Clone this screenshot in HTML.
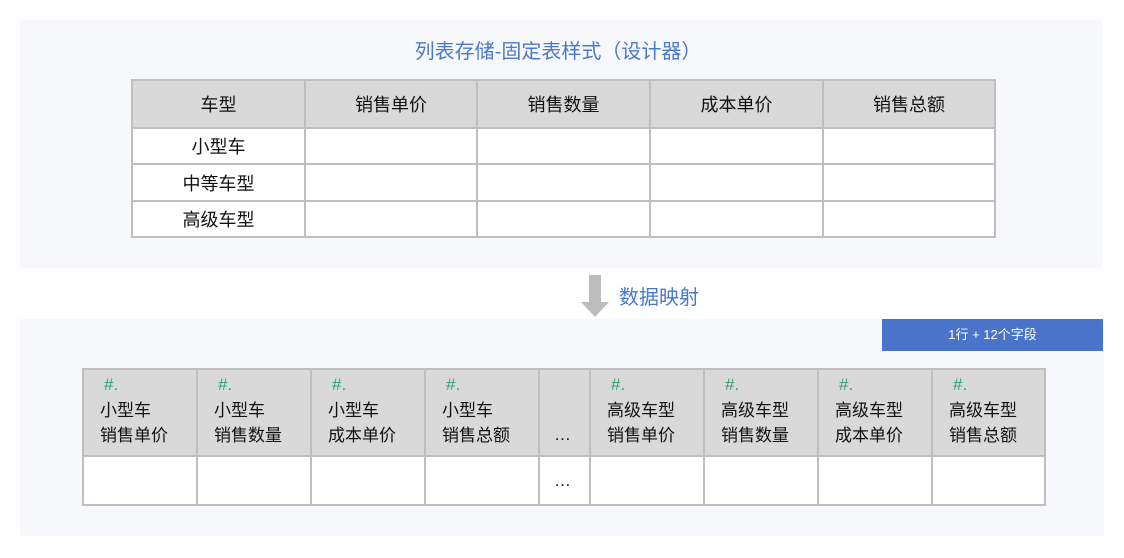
<!DOCTYPE html>
<html><head><meta charset="utf-8"><style>
*{margin:0;padding:0;box-sizing:border-box}
body{width:1124px;height:558px;background:#fff;position:relative;font-family:"Liberation Sans","Noto Sans CJK SC",sans-serif;color:#111;overflow:hidden}
.p{position:absolute;background:#f7f8fc}
.a{position:absolute}
table{border-collapse:collapse;position:absolute;background:#fff}
td{border:2px solid #bfbfbf;padding:0}
.t1 td{font-size:18px;text-align:center}
.h td{background:#d9d9d9}
.t2 td{font-size:17px;vertical-align:top;line-height:25px;padding-left:16px}
.g{color:#2ba56e;padding-left:4px;display:block;line-height:20px;margin-top:5px;margin-bottom:3px}
</style></head><body>
<div class="p" style="left:20px;top:20px;width:1082px;height:248px"></div>
<div class="a" style="left:0;width:1124px;top:35px;text-align:center;font-size:20px;color:#4a78cc;padding-right:8px">列表存储-固定表样式（设计器）</div>
<table class="t1" style="left:131px;top:79px;width:865px">
<tr class="h" style="height:48px"><td style="width:173px">车型</td><td style="width:172px">销售单价</td><td style="width:173px">销售数量</td><td style="width:173px">成本单价</td><td>销售总额</td></tr>
<tr style="height:36px"><td>小型车</td><td></td><td></td><td></td><td></td></tr>
<tr style="height:37px"><td>中等车型</td><td></td><td></td><td></td><td></td></tr>
<tr style="height:36px"><td>高级车型</td><td></td><td></td><td></td><td></td></tr>
</table>
<svg class="a" style="left:581px;top:275px" width="30" height="43"><rect x="8" y="0" width="12" height="27" fill="#bdbdbd"/><polygon points="0,27 28,27 14,42" fill="#bdbdbd"/></svg>
<div class="a" style="left:619px;top:281px;font-size:20px;color:#4a78cc">数据映射</div>
<div class="p" style="left:20px;top:319px;width:1084px;height:217px"></div>
<div class="a" style="left:882px;top:319px;width:221px;height:32px;background:#4a74c9;color:#fff;font-size:13px;text-align:center;line-height:32px">1行 + 12个字段</div>
<table class="t2" style="left:82px;top:368px;width:964px">
<tr class="h" style="height:87px">
<td style="width:114px"><span class="g">#.</span>小型车<br>销售单价</td>
<td style="width:114px"><span class="g">#.</span>小型车<br>销售数量</td>
<td style="width:114px"><span class="g">#.</span>小型车<br>成本单价</td>
<td style="width:114px"><span class="g">#.</span>小型车<br>销售总额</td>
<td style="width:51px;padding-left:14px;vertical-align:bottom;padding-bottom:8px">…</td>
<td style="width:114px"><span class="g">#.</span>高级车型<br>销售单价</td>
<td style="width:114px"><span class="g">#.</span>高级车型<br>销售数量</td>
<td style="width:114px"><span class="g">#.</span>高级车型<br>成本单价</td>
<td><span class="g">#.</span>高级车型<br>销售总额</td>
</tr>
<tr style="height:49px"><td></td><td></td><td></td><td></td><td style="padding-left:14px;vertical-align:middle">…</td><td></td><td></td><td></td><td></td></tr>
</table>
</body></html>
